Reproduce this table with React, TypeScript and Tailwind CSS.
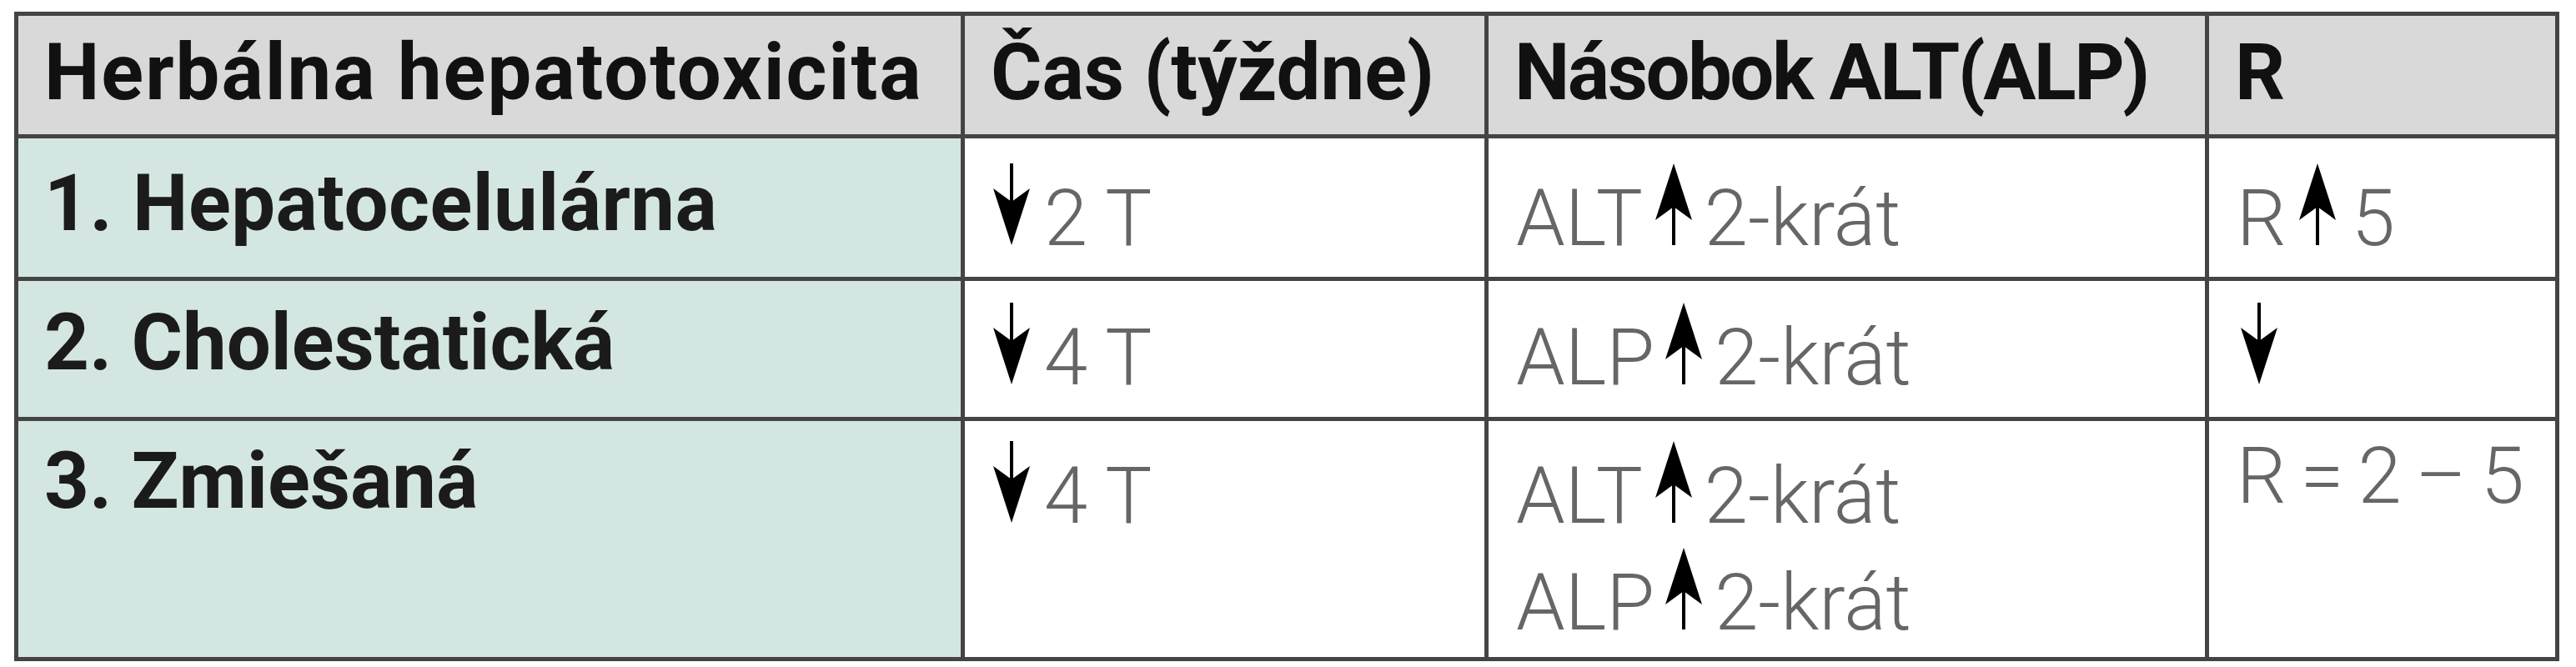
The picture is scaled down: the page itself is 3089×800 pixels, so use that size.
import React from 'react';

const font = { fontFamily: 'Roboto, "Liberation Sans", sans-serif' };

function ArrowDown({ className = '' }: { className?: string }) {
  return (
    <svg viewBox="0 0 50 98" className={`inline w-[50px] h-[98px] align-baseline ${className}`}>
      <line x1="25" y1="0" x2="25" y2="60" stroke="#000" strokeWidth="4" />
      <path d="M25 98 L3 30 L25 46 L47 30 Z" fill="#000" />
    </svg>
  );
}

function ArrowUp({ className = '' }: { className?: string }) {
  return (
    <svg viewBox="0 0 50 98" className={`inline w-[50px] h-[98px] align-baseline ${className}`}>
      <line x1="25" y1="38" x2="25" y2="98" stroke="#000" strokeWidth="4" />
      <path d="M25 0 L3 68 L25 52 L47 68 Z" fill="#000" />
    </svg>
  );
}

const head = 'bg-[#d9d9d9] pl-[31px] pt-[12px] text-[94px] font-bold text-[#111] leading-[112px] whitespace-nowrap';
const first = 'bg-[#d4e6e1] pl-[31px] text-[94px] font-bold text-[#1b1b1b] leading-[112px] whitespace-nowrap';
const cell = 'bg-white pl-[33px] text-[94px] font-light text-[#666] leading-[124px] whitespace-nowrap';

export default function App() {
  return (
    <div className="w-[3089px] h-[800px] bg-white pt-[14px] pl-[17px]" style={font}>
      <div className="w-[3052px] bg-[#444] p-[5px] grid grid-cols-[1130px_623px_859px_1fr] grid-rows-[142px_166px_163px_283px] gap-[5px]">
        <div className={`${head} tracking-[2px]`}>Herbálna hepatotoxicita</div>
        <div className={head}>Čas (týždne)</div>
        <div className={`${head} tracking-[-2.5px]`}>Násobok ALT(ALP)</div>
        <div className={head}>R</div>

        <div className={`${first} pt-[22px] tracking-[0.5px]`}>1. Hepatocelulárna</div>
        <div className={`${cell} pt-[30px]`}><ArrowDown className="-ml-[2px] mr-[14px]" />2 T</div>
        <div className={`${cell} pt-[30px]`}>ALT<ArrowUp className="ml-[12px] mr-[12px]" />2-krát</div>
        <div className={`${cell} pt-[30px]`}>R<ArrowUp className="ml-[12px] mr-[16px]" />5</div>

        <div className={`${first} pt-[18px]`}>2. Cholestatická</div>
        <div className={`${cell} pt-[26px]`}><ArrowDown className="-ml-[2px] mr-[14px]" />4 T</div>
        <div className={`${cell} pt-[26px]`}>ALP<ArrowUp className="ml-[10px] mr-[12px]" />2-krát</div>
        <div className={`${cell} pt-[26px]`}><ArrowDown className="ml-[2px]" /></div>

        <div className={`${first} pt-[16px]`}>3. Zmiešaná</div>
        <div className={`${cell} pt-[24px]`}><ArrowDown className="-ml-[2px] mr-[14px]" />4 T</div>
        <div className={`${cell} pt-[24px]`}>
          <div>ALT<ArrowUp className="ml-[12px] mr-[12px]" />2-krát</div>
          <div>ALP<ArrowUp className="ml-[10px] mr-[12px]" />2-krát</div>
        </div>
        <div className={`${cell} pt-[4px] tracking-[-3px]`}>R = 2 – 5</div>
      </div>
    </div>
  );
}
